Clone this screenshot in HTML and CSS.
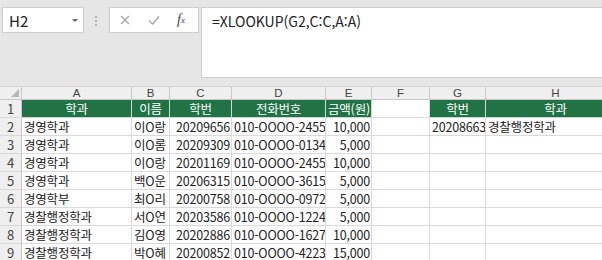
FILE: index.html
```html
<!DOCTYPE html>
<html lang="ko">
<head>
  <meta charset="UTF-8" />
  <title>XLOOKUP</title>
  <link rel="stylesheet" href="styles.css">
</head>
<body>
  <div class="formula-area">
    <div class="name-box">
      <span>H2</span>
      <span class="caret"></span>
    </div>
    <div class="grip"><i></i><i></i><i></i></div>
    <div class="fx-box">
      <svg class="ico" width="12" height="12" viewBox="0 0 12 12"><path d="M2 2 L10 10 M10 2 L2 10" stroke="#a6a6a6" stroke-width="1.3" fill="none"/></svg>
      <svg class="ico" width="14" height="12" viewBox="0 0 14 12"><path d="M2 6.5 L5.5 10 L12 2.5" stroke="#a6a6a6" stroke-width="1.4" fill="none"/></svg>
      <span class="fx">f<sub>x</sub></span>
    </div>
    <div class="formula">=XLOOKUP(G2,C:C,A:A)</div>
  </div>

  <div class="sheet" id="sheet"></div>

  <script>
    const cols = ["A", "B", "C", "D", "E", "F", "G", "H"];
    const head = ["학과", "이름", "학번", "전화번호", "금액(원)", "", "학번", "학과"];
    const rows = [
      ["경영학과", "이O랑", "20209656", "010-OOOO-2455", "10,000"],
      ["경영학과", "이O롬", "20209309", "010-OOOO-0134", "5,000"],
      ["경영학과", "이O랑", "20201169", "010-OOOO-2455", "10,000"],
      ["경영학과", "백O운", "20206315", "010-OOOO-3615", "5,000"],
      ["경영학부", "최O리", "20200758", "010-OOOO-0972", "5,000"],
      ["경찰행정학과", "서O연", "20203586", "010-OOOO-1224", "5,000"],
      ["경찰행정학과", "김O영", "20202886", "010-OOOO-1627", "10,000"],
      ["경찰행정학과", "박O혜", "20200852", "010-OOOO-4223", "15,000"]
    ];
    const numCols = [2, 4, 6];

    function cell(text, cls) {
      return `<div class="cell ${cls}">${text}</div>`;
    }

    let html = cell('<span class="corner"></span>', "hdr corner-cell");
    cols.forEach(c => { html += cell(c, "hdr col-hdr"); });

    html += cell("1", "hdr row-hdr");
    head.forEach(h => { html += cell(h, h ? "green" : ""); });

    rows.forEach((r, i) => {
      html += cell(i + 2, "hdr row-hdr");
      for (let j = 0; j < 8; j++) {
        let v = r[j] || "";
        if (i === 0 && j === 6) v = "20208663";
        if (i === 0 && j === 7) v = "경찰행정학과";
        html += cell(v, numCols.includes(j) ? "num" : "");
      }
    });

    document.getElementById("sheet").innerHTML = html;
  </script>
</body>
</html>
```

FILE: styles.css
```css
body {
  margin: 0;
  width: 602px;
  height: 260px;
  overflow: hidden;
  background: #fff;
  font-family: "Noto Sans CJK KR", "Noto Sans", sans-serif;
  color: #222;
}
.formula-area {
  display: flex;
  align-items: flex-start;
  height: 86px;
  padding: 7px 0 0 2px;
  box-sizing: border-box;
  background: #e6e6e6;
}
.name-box {
  display: flex;
  align-items: center;
  justify-content: space-between;
  width: 82px;
  height: 26px;
  box-sizing: border-box;
  padding: 0 5px 0 6px;
  background: #fff;
  border: 1px solid #cfcfcf;
  font-size: 15px;
}
.caret {
  width: 0;
  height: 0;
  border-left: 3px solid transparent;
  border-right: 3px solid transparent;
  border-top: 3px solid #666;
}
.grip {
  display: flex;
  flex-direction: column;
  gap: 2px;
  margin: 9px 12px 0 11px;
}
.grip i {
  width: 2px;
  height: 2px;
  background: #b4b4b4;
}
.fx-box {
  display: flex;
  align-items: center;
  gap: 16px;
  width: 90px;
  height: 26px;
  box-sizing: border-box;
  padding-left: 9px;
  background: #fff;
  border: 1px solid #cfcfcf;
}
.fx {
  font-family: "Liberation Serif", serif;
  font-style: italic;
  font-size: 14px;
  color: #444;
}
.fx sub {
  font-size: 9px;
  vertical-align: 1px;
}
.formula {
  flex: 1;
  height: 71px;
  margin-left: 2px;
  box-sizing: border-box;
  padding: 3px 10px;
  background: #fff;
  border: 1px solid #cfcfcf;
  border-right: none;
  font-size: 14px;
  color: #222;
}
.sheet {
  display: grid;
  grid-template-columns: 22px 110px 38px 62px 94px 46px 58px 56px 140px;
  grid-template-rows: 14px repeat(9, 18px);
}
.cell {
  box-sizing: border-box;
  border-right: 1px solid #dadada;
  border-bottom: 1px solid #dadada;
  padding: 0 2px;
  font-size: 12.5px;
  letter-spacing: -0.2px;
  line-height: 17px;
  white-space: nowrap;
  overflow: hidden;
}
.num {
  text-align: right;
  padding-right: 1px;
}
.hdr {
  background: #efefef;
  color: #444;
  text-align: center;
  border-color: #c8c8c8;
  letter-spacing: 0;
}
.col-hdr {
  font-family: "Liberation Sans", sans-serif;
  font-size: 11.5px;
  line-height: 13px;
  border-top: 1px solid #d0d0d0;
}
.corner-cell {
  position: relative;
  border-top: 1px solid #d0d0d0;
}
.corner {
  position: absolute;
  right: 2px;
  bottom: 2px;
  width: 0;
  height: 0;
  border-left: 8px solid transparent;
  border-bottom: 8px solid #b8b8b8;
}
.row-hdr {
  font-size: 13px;
  border-bottom-color: #d8d8d8;
}
.green {
  background: #217346;
  color: #fff;
  text-align: center;
  border-right-color: #c9dccf;
  border-bottom-color: #c9dccf;
}
```
